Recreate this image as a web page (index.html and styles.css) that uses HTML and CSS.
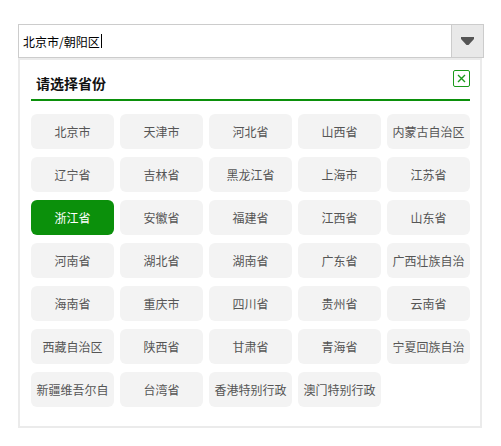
FILE: index.html
```html
<!DOCTYPE html>
<html lang="zh-CN">
<head>
  <meta charset="UTF-8">
  <meta name="viewport" content="width=device-width, initial-scale=1.0">
  <title>省份选择</title>
  <link rel="stylesheet" href="styles.css">
</head>
<body>

  <!--city picker-->
  <div class="picker">
    <div class="combo">
      <div class="combo-text">北京市/朝阳区<span class="caret"></span></div>
      <div class="combo-btn">
        <svg width="13" height="8" viewBox="0 0 13 8">
          <polygon points="0,0 13,0 13,2 7.5,8 5.5,8 0,2" fill="#555"/>
        </svg>
      </div>
    </div>

    <div class="panel">
      <div class="panel-head">
        <span class="panel-title">请选择省份</span>
        <span class="close-btn">
          <svg width="9" height="9" viewBox="0 0 9 9">
            <path d="M1 1 L8 8 M8 1 L1 8" stroke="#1a9a1a" stroke-width="1.4" fill="none"/>
          </svg>
        </span>
      </div>
      <div class="province-grid">
        <span class="province">北京市</span>
        <span class="province">天津市</span>
        <span class="province">河北省</span>
        <span class="province">山西省</span>
        <span class="province">内蒙古自治区</span>
        <span class="province">辽宁省</span>
        <span class="province">吉林省</span>
        <span class="province">黑龙江省</span>
        <span class="province">上海市</span>
        <span class="province">江苏省</span>
        <span class="province active">浙江省</span>
        <span class="province">安徽省</span>
        <span class="province">福建省</span>
        <span class="province">江西省</span>
        <span class="province">山东省</span>
        <span class="province">河南省</span>
        <span class="province">湖北省</span>
        <span class="province">湖南省</span>
        <span class="province">广东省</span>
        <span class="province">广西壮族自治</span>
        <span class="province">海南省</span>
        <span class="province">重庆市</span>
        <span class="province">四川省</span>
        <span class="province">贵州省</span>
        <span class="province">云南省</span>
        <span class="province">西藏自治区</span>
        <span class="province">陕西省</span>
        <span class="province">甘肃省</span>
        <span class="province">青海省</span>
        <span class="province">宁夏回族自治</span>
        <span class="province">新疆维吾尔自</span>
        <span class="province">台湾省</span>
        <span class="province">香港特别行政</span>
        <span class="province">澳门特别行政</span>
      </div>
    </div>
  </div>

</body>
</html>
```

FILE: styles.css
```css
:root{
  --Green: #0b900b;
  --Border: #cccccc;
  --Panel-border: #ebebeb;
  --Btn-bg: #f3f3f3;
  --Text: #555555;
}
*{
  box-sizing: border-box;
  font-family: "Noto Sans CJK SC", "Microsoft YaHei", sans-serif;
}
body{
  margin: 0;
  background-color: #fff;
}
.picker{
  width: 466px;
  margin: 24px 0 0 18px;
}
.combo{
  display: flex;
  height: 34px;
  border: 1px solid var(--Border);
}
.combo-text{
  flex: 1;
  display: flex;
  align-items: center;
  padding-left: 4px;
  font-size: 12px;
  color: #000;
}
.caret{
  display: inline-block;
  width: 1px;
  height: 14px;
  margin-left: 1px;
  background-color: #000;
}
.combo-btn{
  width: 32px;
  display: flex;
  justify-content: center;
  align-items: center;
  background-color: #e9e9e9;
  border-left: 1px solid var(--Border);
}
.panel{
  width: 464px;
  height: 370px;
  border: 2px solid var(--Panel-border);
  padding: 0 10px 0 11px;
}
.panel-head{
  display: flex;
  justify-content: space-between;
  align-items: flex-start;
  height: 41px;
  border-bottom: 2px solid var(--Green);
}
.panel-title{
  margin-top: 13px;
  padding-left: 5px;
  font-size: 14px;
  line-height: 20px;
  font-weight: bold;
  color: #111;
}
.close-btn{
  margin-top: 10px;
  width: 17px;
  height: 17px;
  display: flex;
  justify-content: center;
  align-items: center;
  border: 1px solid #1a9a1a;
  border-radius: 2px;
}
.province-grid{
  display: grid;
  grid-template-columns: repeat(5, 83px);
  grid-auto-rows: 35px;
  gap: 8px 6px;
  margin-top: 13px;
}
.province{
  background-color: var(--Btn-bg);
  border-radius: 6px;
  color: var(--Text);
  font-size: 12px;
  line-height: 35px;
  text-align: center;
  white-space: nowrap;
  overflow: hidden;
}
.province.active{
  background-color: var(--Green);
  color: #fff;
}
```
